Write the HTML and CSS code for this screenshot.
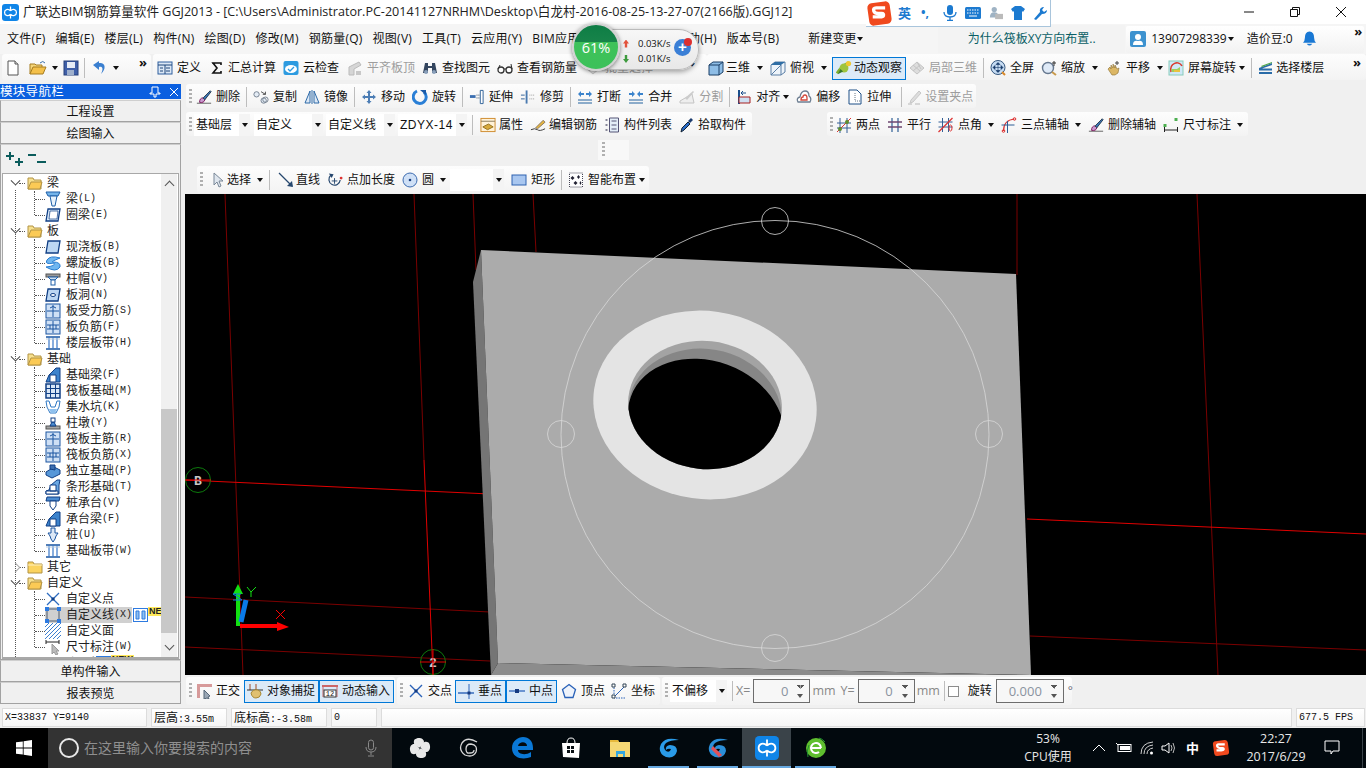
FILE: index.html
```html
<!DOCTYPE html>
<html lang="zh">
<head>
<meta charset="utf-8">
<title>广联达BIM钢筋算量软件 GGJ2013</title>
<link rel="stylesheet" href="styles.css">
</head>
<body>
<svg class="sprite" xmlns="http://www.w3.org/2000/svg">
<defs>
<symbol id="doc" viewBox="0 0 16 16"><path d="M3 1h7l3 3v11H3z" fill="#fff" stroke="#555"/><path d="M10 1v3h3" fill="#ddd" stroke="#555"/></symbol>
<symbol id="open" viewBox="0 0 18 16"><path d="M1 14V4h5l1 1h6v2" fill="#f6d67a" stroke="#a67c20"/><path d="M1 14l3-7h13l-3 7z" fill="#f4c04a" stroke="#a67c20"/><path d="M11 3q3-3 5 0" fill="none" stroke="#3a6ea8"/></symbol>
<symbol id="save" viewBox="0 0 16 16"><rect x="1" y="1" width="14" height="14" fill="#3f5fa8" stroke="#26407a"/><rect x="4" y="2" width="8" height="6" fill="#e6ecf6"/><rect x="4" y="10" width="7" height="5" fill="#9fb0cc"/></symbol>
<symbol id="undo" viewBox="0 0 16 16"><path d="M7 3C13 2 15 8 9 14 12 8 10 6 7 7v3L1 5l6-4z" fill="#3a7fd0"/></symbol>
<symbol id="def" viewBox="0 0 16 16"><rect x="1" y="2" width="14" height="12" fill="#dbe7f5" stroke="#2e5f9e"/><path d="M1 5h14M3 8h3M3 11h3M9 8h4M9 11h4M8 5v9" stroke="#1c4478" fill="none"/></symbol>
<symbol id="sigma" viewBox="0 0 12 16"><path d="M1 3h9v2M10 3H2l4 5-4 5h8v-2" fill="none" stroke="#111" stroke-width="1.6"/></symbol>
<symbol id="cloud" viewBox="0 0 16 16"><rect x="0.5" y="1" width="15" height="14" rx="2" fill="#2d9be0"/><ellipse cx="8" cy="9" rx="6" ry="4" fill="#fff"/><path d="M5 9l2 2 4-4" fill="none" stroke="#2d9be0" stroke-width="1.3"/></symbol>
<symbol id="flat" viewBox="0 0 16 16"><path d="M2 15V7l10-5 2 3-7 4v6z" fill="#d6d6d6" stroke="#bbb"/><path d="M9 15v-4h5v4z" fill="#c8c8c8"/></symbol>
<symbol id="find" viewBox="0 0 16 16"><path d="M3 3h3v3h4V3h3l2 10h-5V8H6v5H1z" fill="#33455e"/><circle cx="4" cy="12" r="2" fill="#8aa0bb"/><circle cx="12" cy="12" r="2" fill="#8aa0bb"/></symbol>
<symbol id="glass" viewBox="0 0 16 16"><circle cx="4" cy="10" r="3" fill="#fff" stroke="#333" stroke-width="1.3"/><circle cx="12" cy="10" r="3" fill="#fff" stroke="#333" stroke-width="1.3"/><path d="M7 9h2M1 9l2-4M15 9l-1-5" stroke="#333" fill="none"/></symbol>
<symbol id="cube" viewBox="0 0 16 16"><path d="M1 5l4-3h10v10l-4 3H1z" fill="#8ebde6" stroke="#1b3f66"/><path d="M1 5h10v10M11 5l4-3" fill="none" stroke="#1b3f66"/></symbol>
<symbol id="cubet" viewBox="0 0 16 16"><path d="M1 5l4-3h10v10l-4 3H1z" fill="#eef4fa" stroke="#5a7ea5"/><path d="M1 5l4-3h10l-4 3z" fill="#2f6ea5"/><path d="M11 5v10M1 15l10-10" stroke="#5a7ea5" fill="none"/></symbol>
<symbol id="orbit" viewBox="0 0 18 18"><path d="M1 15Q5 8 14 3" stroke="#7fae2f" stroke-width="3" fill="none"/><circle cx="9" cy="9" r="5" fill="#9fc43d"/><circle cx="14" cy="4" r="3" fill="#f0c832"/><path d="M2 16l6-3-3-3z" fill="#3c7a2a"/></symbol>
<symbol id="part" viewBox="0 0 16 16"><path d="M1 8l7-6 7 6-7 6z" fill="#ddd" stroke="#c4c4c4"/><path d="M4 5l7 6M8 2l4 7M4 11l7-6" stroke="#c4c4c4" fill="none"/></symbol>
<symbol id="full" viewBox="0 0 16 16"><circle cx="8" cy="7.5" r="7" fill="#c6dcf3" stroke="#36587f"/><path d="M8 3v9M3.500 7.500h9M8 2.500l-2 2h4zM8 12.500l-2-2h4zM3 7.500l2-2v4zM13 7.500l-2-2v4z" fill="#173a6a" stroke="#173a6a" stroke-width=".6"/><path d="M12 12l3 3" stroke="#d8892a" stroke-width="2"/></symbol>
<symbol id="zoomi" viewBox="0 0 16 16"><circle cx="7" cy="8" r="5.500" fill="#dfeaf7" stroke="#66788f" stroke-width="1.400"/><path d="M11 12l4 3" stroke="#c99a4c" stroke-width="2"/><path d="M13 1v5M11 3h4" stroke="#333"/></symbol>
<symbol id="pan" viewBox="0 0 16 16"><path d="M2 9l2-2 1 2V5l2 3V4l2 4V5l2 4 2-1-1 5-3 2H6z" fill="#dcb765" stroke="#8a6f33" stroke-width=".6"/><path d="M11 1v4M9 3h4" stroke="#444"/></symbol>
<symbol id="rot" viewBox="0 0 16 16"><rect x="1" y="1" width="14" height="14" fill="#cfe8f8" stroke="#8cb"/><path d="M3 12c-2-9 8-12 11-6" fill="none" stroke="#d93a2e" stroke-width="1.500"/><path d="M3 9l6 0 3-2v5H4z" fill="#9ccf5e"/><path d="M6 11h6" stroke="#e8c340" stroke-width="2"/></symbol>
<symbol id="floors" viewBox="0 0 16 16"><path d="M1 8L14 3v2L4 8.500h10v2H1zM1 12h13v2H1z" fill="#2a6ca8"/><path d="M3 6l11-4v1L4 7z" fill="#4da547"/></symbol>
<symbol id="brush" viewBox="0 0 18 16"><path d="M1 15h16" stroke="#555"/><path d="M4 14q0-5 4-5l2 2q-1 4-6 3z" fill="#c99ad0" stroke="#715"/><path d="M8 9l8-8 1 1-7 9z" fill="#3a76b8" stroke="#234"/></symbol>
<symbol id="copy" viewBox="0 0 18 16"><circle cx="4" cy="5" r="3" fill="#e4ecf5" stroke="#6c7a8a"/><circle cx="12" cy="12" r="3" fill="#e4ecf5" stroke="#6c7a8a"/><circle cx="14" cy="11" r="3" fill="none" stroke="#6c7a8a"/><path d="M9 2l5 3M14 2v3h-3" stroke="#444" fill="none"/></symbol>
<symbol id="mirror" viewBox="0 0 16 16"><path d="M1 14L6 2v12z" fill="#dce8f5" stroke="#2e6aa8"/><path d="M15 14L10 2v12z" fill="#dce8f5" stroke="#2e6aa8"/><path d="M8 1v14" stroke="#2e6aa8"/></symbol>
<symbol id="move" viewBox="0 0 16 16"><path d="M8 1l2.500 3H9v3h3V5.500L15 8l-3 2.500V9H9v3h1.500L8 15l-2.500-3H7V9H4v1.500L1 8l3-2.500V7h3V4H5.500z" fill="#4d7eb5"/></symbol>
<symbol id="turn" viewBox="0 0 16 16"><path d="M5 2a6.500 6.500 0 1 0 7 1" fill="none" stroke="#2a7fd6" stroke-width="3"/><path d="M8 1h6v5z" fill="#1a5aa8"/></symbol>
<symbol id="ext" viewBox="0 0 17 16"><path d="M12 1h3v14h-3z" fill="#fff" stroke="#2c5f96"/><path d="M1 6h6v3H1z" fill="#3a6eb0"/><path d="M8 6h3M8 9h3" stroke="#345" stroke-dasharray="1 1"/></symbol>
<symbol id="trim" viewBox="0 0 17 16"><path d="M6 1h2v14H6z" fill="#4a7ab0"/><path d="M1 6h4M1 10h4" stroke="#2c5f96"/><path d="M10 6h5M10 10h5" stroke="#999" stroke-dasharray="1 1"/></symbol>
<symbol id="brk" viewBox="0 0 16 16"><path d="M1 11h14M1 14h14" stroke="#23629f"/><path d="M1 5l3-3v2h3v2H4v2zM15 5l-3-3v2H9v2h3v2z" fill="#3a83cc"/></symbol>
<symbol id="merge" viewBox="0 0 16 16"><path d="M1 11h14M1 14h14" stroke="#23629f"/><path d="M7 5L4 2v2H1v2h3v2zM9 5l3-3v2h3v2h-3v2z" fill="#3a83cc"/></symbol>
<symbol id="split" viewBox="0 0 16 16"><path d="M1 14h14L13 5 1 12z" fill="#eee" stroke="#c4c4c4"/><path d="M6 9l8-7 1 1-7 8z" fill="#ccc"/></symbol>
<symbol id="align" viewBox="0 0 14 16"><path d="M2 1v14" stroke="#1b4f8c" stroke-width="2"/><path d="M2 8h11v6H2z" fill="#cfe0f2" stroke="#a82020"/><path d="M9 4H4l2-2M4 4l2 2" stroke="#1b4f8c" fill="none"/></symbol>
<symbol id="offs" viewBox="0 0 16 16"><path d="M2 13q-2-4 2-5 1-6 5-6 4 0 4 5 3 2 1 6z" fill="#fff" stroke="#6e7f92" stroke-width="1.300"/><path d="M5 11q0-3 2-3 0-2 2-2t2 3v2z" fill="none" stroke="#d34b3e" stroke-width="1.300"/></symbol>
<symbol id="stretch" viewBox="0 0 14 16"><path d="M1 1h8l4 4v10H1z" fill="#fff" stroke="#1d4f86"/><path d="M7 4v8h5" stroke="#678" stroke-dasharray="1 1" fill="none"/></symbol>
<symbol id="gripi" viewBox="0 0 14 16"><path d="M0 15h4M7 15h5" stroke="#ccc" stroke-width="1.500"/><path d="M3 11l8-9 2 2-8 9-3 1z" fill="#ddd" stroke="#c8c8c8"/></symbol>
<symbol id="prop" viewBox="0 0 17 16"><rect x="1" y="1" width="15" height="14" fill="#fff2d8" stroke="#cf8a2c"/><path d="M1 4h15" stroke="#8a7b5a"/><path d="M3 10l6-3 5 3-6 3z" fill="#d8aa3c" stroke="#93701f"/></symbol>
<symbol id="edit" viewBox="0 0 17 16"><path d="M1 13q4-2 7 0 2 2 8-1" fill="none" stroke="#333"/><path d="M6 11l8-8 2 2-8 7z" fill="#e6b63e" stroke="#876"/></symbol>
<symbol id="list" viewBox="0 0 15 16"><path d="M5 1h9v14H5z" fill="#e4eef8" stroke="#557"/><path d="M7 4h5M7 8h5M7 12h5" stroke="#557"/><path d="M1 2h2v2H1zM1 7h2v2H1zM1 12h2v2H1z" fill="#889"/></symbol>
<symbol id="pick" viewBox="0 0 14 16"><path d="M1 15l1-4 6-6 2 2-6 6z" fill="#2a6cc8" stroke="#123"/><path d="M8 4l3-3 2 2-3 3z" fill="#1c3c6e"/></symbol>
<symbol id="two" viewBox="0 0 14 16"><path d="M3 1v15M10 1v15M0 6h14M0 11h14" stroke="#345f96"/><path d="M0 15L14 1" stroke="#d33"/><circle cx="3" cy="12" r="2" fill="#5d8e2e"/><circle cx="10" cy="5" r="2" fill="#5d8e2e"/></symbol>
<symbol id="para" viewBox="0 0 14 16"><path d="M4 1v14M10 1v14M0 5h14M0 10h14" stroke="#2f5f96" stroke-width="1.200"/><path d="M0 5h14M0 10h14" stroke="#8c3a5c"/></symbol>
<symbol id="angle" viewBox="0 0 15 16"><path d="M4 1v14M10 1v14M0 5h14M0 10h14" stroke="#345f96"/><path d="M0 15L14 1" stroke="#d33" stroke-width="1.200"/><ellipse cx="12" cy="11" rx="1.500" ry="3" fill="none" stroke="#d33"/></symbol>
<symbol id="three" viewBox="0 0 15 16"><path d="M2 14Q2 3 13 2" fill="none" stroke="#d33" stroke-width="1.200"/><path d="M6 4v12M0 8h13" stroke="#2f5f96"/><circle cx="2" cy="14" r="1.300" fill="none" stroke="#d33"/><circle cx="13" cy="2" r="1.300" fill="none" stroke="#d33"/></symbol>
<symbol id="dim" viewBox="0 0 15 16"><path d="M1 10v5M14 10v5M1 13h13" stroke="#222"/><path d="M0 7h3v3H0zM11 1h3v3h-3z" fill="#4caf50"/></symbol>
<symbol id="cursor" viewBox="0 0 12 16"><path d="M2 1v12l3-3 2 5 2-1-2-5h4z" fill="#dfe6ee" stroke="#7a8898"/></symbol>
<symbol id="line" viewBox="0 0 16 16"><path d="M1 1l13 13" stroke="#26476e" stroke-width="1.300"/><path d="M15 15l-6-1 5-5z" fill="#26476e"/></symbol>
<symbol id="ptlen" viewBox="0 0 17 16"><path d="M14 8a6 6 0 1 1-10-5" fill="none" stroke="#26476e" stroke-width="1.300"/><path d="M2 1l3 5 2-4z" fill="#26476e"/><path d="M8 6v6M5 9h6" stroke="#26476e"/><circle cx="15" cy="6" r="1.500" fill="#d33"/></symbol>
<symbol id="circ" viewBox="0 0 16 16"><circle cx="8" cy="8" r="7" fill="#cfe0f6" stroke="#3d6cb0"/><circle cx="8" cy="8" r="1.300" fill="#1a3f80"/></symbol>
<symbol id="rect" viewBox="0 0 16 16"><rect x="1" y="3" width="14" height="10" fill="#a9c7f0" stroke="#2e62b0"/></symbol>
<symbol id="smart" viewBox="0 0 15 16"><rect x="1" y="1" width="13" height="14" fill="#fff" stroke="#445" stroke-dasharray="1 1"/><path d="M4 4l2 2-2 2-2-2zM10 3l1.500 2-1.500 2-1.500-2zM7 9l2 2-2 2-2-2zM12 9l1 2-1 2-1-2z" fill="#223"/></symbol>
<symbol id="ortho" viewBox="0 0 16 16"><path d="M1 15V1h15v3H4v11z" fill="#d79a9a"/><path d="M8 7l6 6-2 1 1 2-2-1-3 1z" fill="#9aa7b5" stroke="#567"/></symbol>
<symbol id="snap" viewBox="0 0 16 16"><path d="M3 1v6M9 1v6" stroke="#a04a28"/><path d="M0 7h16" stroke="#333"/><path d="M4 10q2-4 7-3 3 1 3 4-1 4-5 4t-5-5z" fill="#e0c070" stroke="#a88834"/></symbol>
<symbol id="dyn" viewBox="0 0 16 16"><path d="M0 2h16v2H0z" fill="#c66"/><path d="M1 2v12M15 2v12" stroke="#c66"/><rect x="2" y="7" width="12" height="7" fill="#fff" stroke="#333"/><text x="8" y="13" font-size="7" text-anchor="middle" font-family="Liberation Mono" fill="#111">12</text></symbol>
<symbol id="cross" viewBox="0 0 16 16"><path d="M2 2l12 12M14 2L2 14" stroke="#2a62b8" stroke-width="1.400"/><rect x="6.500" y="6.500" width="3" height="3" fill="#143a80"/></symbol>
<symbol id="perp" viewBox="0 0 16 16"><path d="M0 10h16" stroke="#2a62b8" stroke-width="1.400"/><path d="M11 1v15" stroke="#2a62b8"/><rect x="9.500" y="8.500" width="3" height="3" fill="#143a80"/></symbol>
<symbol id="midp" viewBox="0 0 16 16"><path d="M0 8h16" stroke="#3b6fc0" stroke-width="1.400"/><rect x="6" y="6" width="4" height="4" fill="#143a80"/></symbol>
<symbol id="vert" viewBox="0 0 16 16"><path d="M8 1.500l6.500 5-2.500 8H4l-2.500-8z" fill="#eef3fb" stroke="#2a62b8" stroke-width="1.300"/></symbol>
<symbol id="coord" viewBox="0 0 16 16"><path d="M3 2v13h12" stroke="#2a62b8" stroke-dasharray="1.500 1" fill="none"/><path d="M3 14L14 3" stroke="#2a62b8"/><path d="M1 1h3v3H1zM12 1h3v3h-3zM1 12h3v3H1z" fill="#fff" stroke="#345"/></symbol>

<symbol id="tfolder" viewBox="0 0 16 14"><path d="M1 13V2h5l1 2h7v9z" fill="#f7e08e" stroke="#b29344"/><path d="M1 13l3-7h11l-2 7z" fill="#fbca55" stroke="#b29344"/></symbol>
<symbol id="cfolder" viewBox="0 0 16 14"><path d="M1 13V2h5l1 2h8v9z" fill="#fbd35f" stroke="#b29344"/><path d="M1 5h14" stroke="#fff2c4"/></symbol>
<symbol id="tbeam" viewBox="0 0 16 16"><path d="M1 1h14l-2 4H3z" fill="#74b4ea" stroke="#1e5fa8"/><path d="M5 5h7l-2 10H7z" fill="#e7f2fc" stroke="#1e5fa8"/></symbol>
<symbol id="tslab" viewBox="0 0 16 16"><path d="M3 2h12l-2 12H1z" fill="#bcd7f3" stroke="#103f85" stroke-width="1.300"/></symbol>
<symbol id="tring" viewBox="0 0 16 16"><path d="M3 2h12l-2 12H1z" fill="#d9e8f8" stroke="#103f85" stroke-width="1.300"/><path d="M5 4h8l-1 8H4z" fill="#fff" stroke="#103f85" stroke-width=".7"/></symbol>
<symbol id="tspi" viewBox="0 0 16 16"><path d="M15 3Q5 0 2 5t7 3q2 3-8 4 10 6 14 0 1-5-7-5-3 0 7-4z" fill="#6fb6f0" stroke="#2a7dd0"/></symbol>
<symbol id="tcap" viewBox="0 0 16 16"><rect x="1" y="3" width="14" height="3" fill="#999" stroke="#555"/><path d="M3 6h10l-3 3H6z" fill="#cde" stroke="#1e5fa8"/><rect x="6" y="9" width="4" height="5" fill="#fff" stroke="#1e5fa8"/></symbol>
<symbol id="thole" viewBox="0 0 16 16"><path d="M3 2h12l-2 12H1z" fill="#bcd7f3" stroke="#103f85" stroke-width="1.300"/><ellipse cx="8" cy="8" rx="2.500" ry="1.500" fill="#fff" stroke="#103f85"/></symbol>
<symbol id="tbar" viewBox="0 0 16 16"><rect x="1" y="1" width="14" height="14" fill="#cfe0f5" stroke="#1b55a0"/><path d="M8 2v12M2 8h12M5 5q3-3 6 0" fill="none" stroke="#1b55a0"/></symbol>
<symbol id="tneg" viewBox="0 0 16 16"><rect x="1" y="1" width="14" height="14" fill="#cfe0f5" stroke="#1b55a0"/><path d="M8 2v12M2 6h12M2 10h12M5 6v4M11 6v4" fill="none" stroke="#1b55a0"/></symbol>
<symbol id="tband" viewBox="0 0 16 16"><path d="M1 2h14M1 14h14" stroke="#1b55a0" stroke-width="1.600"/><path d="M4 2v12M8 2v12M12 2v12" stroke="#3a78c8" stroke-width="1.200"/><path d="M1 4h14" stroke="#bcd" /></symbol>
<symbol id="tfbm" viewBox="0 0 16 16"><path d="M1 15l3-7 7-7h4v14z" fill="#3d83cc" stroke="#103f85"/><path d="M5 8h6v7H5z" fill="#fff" stroke="#103f85"/></symbol>
<symbol id="traft" viewBox="0 0 16 16"><rect x="1" y="1" width="14" height="14" fill="#dbe8f7" stroke="#103f85" stroke-width="1.500"/><path d="M5.500 1v14M10.500 1v14M1 5.500h14M1 10.500h14" stroke="#103f85"/></symbol>
<symbol id="tpit" viewBox="0 0 16 16"><path d="M1 2l3 0 2 6h4l2-6h3l-1 6-3 6H5L2 8z" fill="#fff" stroke="#2e78c4"/><path d="M4 10h8l-2 4H6z" fill="#8ec0ee"/></symbol>
<symbol id="tpier" viewBox="0 0 16 16"><rect x="1" y="11" width="14" height="3" fill="#a5a5a5" stroke="#555"/><path d="M5 11l2-4h2l2 4z" fill="#4b8bd0" stroke="#103f85"/><rect x="6" y="3" width="4" height="4" fill="#fff" stroke="#103f85"/></symbol>
<symbol id="tfoot" viewBox="0 0 16 16"><path d="M1 9l8-5 6 3v4l-8 4-6-3z" fill="#5697d8" stroke="#103f85"/><path d="M5 6V2h5v5z" fill="#3d6fb0" stroke="#103f85"/></symbol>
<symbol id="tstrip" viewBox="0 0 16 16"><path d="M1 15v-3l3-1 2-5 6-5h3l-1 5v9z" fill="#6aa7e2" stroke="#103f85"/><path d="M1 12h12v3H1zM5 6h6v6H5z" fill="#fff" stroke="#103f85"/></symbol>
<symbol id="tpcap" viewBox="0 0 16 16"><path d="M2 2h13l-1 4H1z" fill="#4b8bd0" stroke="#103f85"/><path d="M5 6h6v5l-3 4-3-4z" fill="#fff" stroke="#103f85"/></symbol>
<symbol id="tpile" viewBox="0 0 16 16"><path d="M6 1h4v5h3l-2 3-1 3-2 3-2-3-1-3-2-3h3z" fill="#dce8f6" stroke="#1b55a0"/></symbol>
<symbol id="tpt" viewBox="0 0 16 16"><path d="M2 2l12 12M14 2L2 14" stroke="#2d6cc0" stroke-width="1.300"/><rect x="6.500" y="6.500" width="3" height="3" fill="#103f85"/></symbol>
<symbol id="tsq" viewBox="0 0 16 16"><rect x="2" y="2" width="12" height="12" fill="none" stroke="#4a5a70"/><path d="M0 0h4v4H0zM12 0h4v4h-4zM0 12h4v4H0zM12 12h4v4h-4z" fill="#2d7ae0"/></symbol>
<symbol id="thatch" viewBox="0 0 16 16"><path d="M0 4l4-4M0 8l8-8M0 12L12 0M0 16L16 0M4 16L16 4M8 16l8-8M12 16l4-4" stroke="#3b7fd0"/></symbol>
<symbol id="tdim" viewBox="0 0 16 16"><path d="M1 1v4M14 1v4M1 3h13" stroke="#222"/><path d="M7 5v10l2-2 2 3 2-1-2-3h3z" fill="#bbb" stroke="#999"/></symbol>
<symbol id="tgrid" viewBox="0 0 15 14"><rect x=".5" y=".5" width="14" height="13" fill="#fff" stroke="#2d7ae0"/><path d="M3 3h3v8H3zM9 3h3v8H9z" fill="#8fc0f0" stroke="#2d7ae0"/></symbol>

<symbol id="app" viewBox="0 0 20 20"><rect width="20" height="20" rx="3.500" fill="#0f85e8"/><path d="M10 3v5M10 12v5M10 8C7 5 3 6.500 3 10s4 5 7 2M10 8c3-3 7-1.500 7 2s-4 5-7 2" fill="none" stroke="#fff" stroke-width="1.500"/></symbol>
<symbol id="sogou" viewBox="0 0 24 24"><rect x="2" y="2" width="20" height="20" rx="4" fill="#f0491e" transform="rotate(-8 12 12)"/><path d="M17 7H9q-3 0-2 3 1 2 4 2h3q2 0 1.500 2-.5 1-3 1H6" fill="none" stroke="#fff" stroke-width="3"/></symbol>
<symbol id="blade" viewBox="0 0 22 22"><path d="M11 10.500C6 10 3.500 6 5.500 2.500 9-.5 15 1 15 5c0 2.500-2.500 3-4 5.500z" fill="#e8e8e8"/></symbol>
</defs>
</svg>

<header class="titlebar">
  <svg class="ttl-icon"><use href="#app"/></svg>
  <span class="ttl-text">广联达BIM钢筋算量软件 GGJ2013 - [C:\Users\Administrator.PC-20141127NRHM\Desktop\白龙村-2016-08-25-13-27-07(2166版).GGJ12]</span>
  <span class="winbtns">
    <svg class="wb" viewBox="0 0 12 12"><path d="M1 6h10" stroke="#111"/></svg>
    <svg class="wb" viewBox="0 0 12 12"><path d="M1.500 3.500h7v7h-7zM3.500 3.500v-2h7v7h-2" fill="none" stroke="#111"/></svg>
    <svg class="wb" viewBox="0 0 12 12"><path d="M1 1l10 10M11 1L1 11" stroke="#111"/></svg>
  </span>
</header>

<nav class="menubar">
  <span class="mi">文件(F)</span><span class="mi">编辑(E)</span><span class="mi">楼层(L)</span><span class="mi">构件(N)</span><span class="mi">绘图(D)</span><span class="mi">修改(M)</span><span class="mi">钢筋量(Q)</span><span class="mi">视图(V)</span><span class="mi">工具(T)</span><span class="mi">云应用(Y)</span><span class="mi">BIM应用(I)</span><span class="mi mi-help">帮助(H)</span><span class="mi">版本号(B)</span>
  <span class="mi mi-new">新建变更<i class="dd"></i></span>
  <span class="ask">为什么筏板XY方向布置..</span>
  <span class="user">
    <svg class="i" viewBox="0 0 16 16"><rect width="16" height="16" rx="2" fill="#3d92cf"/><circle cx="8" cy="6" r="3" fill="#fff"/><path d="M3 14q0-5 5-4 5-1 5 4z" fill="#fff"/></svg>
    <span>13907298339</span><i class="dd"></i><span class="beans">造价豆:0</span>
    <svg class="bell" viewBox="0 0 14 16"><path d="M7 0q5 0 5 7 0 3 2 5H0q2-2 2-5 0-7 5-7z" fill="#1978d4"/><path d="M4 13h6q-3 4-6 0z" fill="#1978d4"/></svg>
    <span class="more more-user">»</span>
  </span>
</nav>

<div class="toolrow">
  <div class="tb tb-a">
    <svg class="i"><use href="#doc"/></svg>
    <svg class="i i-open"><use href="#open"/></svg><i class="dd dd-s"></i>
    <svg class="i"><use href="#save"/></svg>
    <i class="sep"></i>
    <svg class="i"><use href="#undo"/></svg><i class="dd dd-s"></i>
    <span class="more">»</span>
  </div>
  <div class="tb tb-b">
    <span class="t"><svg class="i"><use href="#def"/></svg>定义</span>
    <span class="t t-sig"><svg class="i i14"><use href="#sigma"/></svg>汇总计算</span>
    <span class="t"><svg class="i"><use href="#cloud"/></svg>云检查</span>
    <span class="t off"><svg class="i"><use href="#flat"/></svg>平齐板顶</span>
    <span class="t"><svg class="i"><use href="#find"/></svg>查找图元</span>
    <span class="t"><svg class="i"><use href="#glass"/></svg>查看钢筋量</span>
    <span class="t off"><svg class="i"><use href="#part"/></svg>批量选择</span>
    <span class="more more-b">»</span>
  </div>
  <div class="tb tb-c">
    <span class="t t-tight"><svg class="i"><use href="#cube"/></svg>三维</span><i class="dd dd-g"></i>
    <span class="t"><svg class="i"><use href="#cubet"/></svg>俯视</span><i class="dd dd-g"></i>
    <span class="t t-tight active t-obs"><svg class="i"><use href="#orbit"/></svg>动态观察</span>
    <span class="t off t-loc"><svg class="i"><use href="#part"/></svg>局部三维</span>
    <i class="sep"></i>
    <span class="t"><svg class="i"><use href="#full"/></svg>全屏</span>
    <span class="t"><svg class="i"><use href="#zoomi"/></svg>缩放</span><i class="dd dd-g"></i>
    <span class="t t-pan"><svg class="i"><use href="#pan"/></svg>平移</span><i class="dd dd-g"></i>
    <span class="t t-scr"><svg class="i"><use href="#rot"/></svg>屏幕旋转</span><i class="dd"></i>
    <i class="sep"></i>
    <span class="t t-tight"><svg class="i"><use href="#floors"/></svg>选择楼层</span>
    <span class="more more-c">»</span>
  </div>
</div>

<main class="main">
  <aside class="side">
    <div class="side-head"><span>模块导航栏</span>
      <svg class="pin" viewBox="0 0 12 12"><path d="M3 1h6v6h2v1H7v3H5V8H1V7h2z" fill="none" stroke="#fff"/></svg>
      <svg class="pin" viewBox="0 0 12 12"><path d="M2 2l8 8M10 2l-8 8" stroke="#fff"/></svg>
    </div>
    <div class="side-btn">工程设置</div>
    <div class="side-btn">绘图输入</div>
    <div class="panel">
      <div class="panel-tools">
        <svg class="exp" viewBox="0 0 18 16"><path d="M4 1v8M0 5h8M13 7v8M9 11h8" stroke="#0b5c5c" stroke-width="2" fill="none"/></svg>
        <svg class="exp" viewBox="0 0 18 16"><path d="M0 4h8M9 11h9" stroke="#0b5c5c" stroke-width="2" fill="none"/></svg>
      </div>
      <div class="tree-frame">
        <div class="tree">
          <div class="g"><i class="chev"></i><svg class="fo"><use href="#tfolder"/></svg>梁</div>
          <div class="kids">
            <div class="c"><svg class="i"><use href="#tbeam"/></svg>梁<span class="m">(L)</span></div>
            <div class="c"><svg class="i"><use href="#tring"/></svg>圈梁<span class="m">(E)</span></div>
          </div>
          <div class="g"><i class="chev"></i><svg class="fo"><use href="#tfolder"/></svg>板</div>
          <div class="kids">
            <div class="c"><svg class="i"><use href="#tslab"/></svg>现浇板<span class="m">(B)</span></div>
            <div class="c"><svg class="i"><use href="#tspi"/></svg>螺旋板<span class="m">(B)</span></div>
            <div class="c"><svg class="i"><use href="#tcap"/></svg>柱帽<span class="m">(V)</span></div>
            <div class="c"><svg class="i"><use href="#thole"/></svg>板洞<span class="m">(N)</span></div>
            <div class="c"><svg class="i"><use href="#tbar"/></svg>板受力筋<span class="m">(S)</span></div>
            <div class="c"><svg class="i"><use href="#tneg"/></svg>板负筋<span class="m">(F)</span></div>
            <div class="c"><svg class="i"><use href="#tband"/></svg>楼层板带<span class="m">(H)</span></div>
          </div>
          <div class="g"><i class="chev"></i><svg class="fo"><use href="#tfolder"/></svg>基础</div>
          <div class="kids">
            <div class="c"><svg class="i"><use href="#tfbm"/></svg>基础梁<span class="m">(F)</span></div>
            <div class="c"><svg class="i"><use href="#traft"/></svg>筏板基础<span class="m">(M)</span></div>
            <div class="c"><svg class="i"><use href="#tpit"/></svg>集水坑<span class="m">(K)</span></div>
            <div class="c"><svg class="i"><use href="#tpier"/></svg>柱墩<span class="m">(Y)</span></div>
            <div class="c"><svg class="i"><use href="#tbar"/></svg>筏板主筋<span class="m">(R)</span></div>
            <div class="c"><svg class="i"><use href="#tneg"/></svg>筏板负筋<span class="m">(X)</span></div>
            <div class="c"><svg class="i"><use href="#tfoot"/></svg>独立基础<span class="m">(P)</span></div>
            <div class="c"><svg class="i"><use href="#tstrip"/></svg>条形基础<span class="m">(T)</span></div>
            <div class="c"><svg class="i"><use href="#tpcap"/></svg>桩承台<span class="m">(V)</span></div>
            <div class="c"><svg class="i"><use href="#tfbm"/></svg>承台梁<span class="m">(F)</span></div>
            <div class="c"><svg class="i"><use href="#tpile"/></svg>桩<span class="m">(U)</span></div>
            <div class="c"><svg class="i"><use href="#tband"/></svg>基础板带<span class="m">(W)</span></div>
          </div>
          <div class="g"><i class="chev chev-r"></i><svg class="fo"><use href="#cfolder"/></svg>其它</div>
          <div class="g"><i class="chev"></i><svg class="fo"><use href="#tfolder"/></svg>自定义</div>
          <div class="kids">
            <div class="c"><svg class="i"><use href="#tpt"/></svg>自定义点</div>
            <div class="c"><svg class="i"><use href="#tsq"/></svg><span class="sel">自定义线<span class="m">(X)</span></span><svg class="tg"><use href="#tgrid"/></svg><span class="new">NE</span></div>
            <div class="c"><svg class="i"><use href="#thatch"/></svg>自定义面</div>
            <div class="c"><svg class="i"><use href="#tdim"/></svg>尺寸标注<span class="m">(W)</span></div>
          </div>
          <div class="g"><i class="chev"></i><svg class="fo"><use href="#tfolder"/></svg>CAD识别<svg class="tg"><use href="#tgrid"/></svg><span class="new">NEW</span></div>
        </div>
        <div class="scroll"><i class="up"></i><div class="track"><div class="thumb"></div></div><i class="down"></i></div>
      </div>
    </div>
    <div class="side-btn">单构件输入</div>
    <div class="side-btn">报表预览</div>
  </aside>

  <section class="work">
    <div class="tb row2">
      <i class="grip"></i>
      <span class="t"><svg class="i"><use href="#brush"/></svg>删除</span><i class="sep"></i>
      <span class="t"><svg class="i"><use href="#copy"/></svg>复制</span>
      <span class="t"><svg class="i"><use href="#mirror"/></svg>镜像</span><i class="sep"></i>
      <span class="t"><svg class="i"><use href="#move"/></svg>移动</span>
      <span class="t"><svg class="i"><use href="#turn"/></svg>旋转</span><i class="sep"></i>
      <span class="t"><svg class="i"><use href="#ext"/></svg>延伸</span>
      <span class="t"><svg class="i"><use href="#trim"/></svg>修剪</span><i class="sep"></i>
      <span class="t"><svg class="i"><use href="#brk"/></svg>打断</span>
      <span class="t"><svg class="i"><use href="#merge"/></svg>合并</span>
      <span class="t off"><svg class="i"><use href="#split"/></svg>分割</span><i class="sep"></i>
      <span class="t"><svg class="i"><use href="#align"/></svg>对齐</span><i class="dd"></i>
      <span class="t"><svg class="i"><use href="#offs"/></svg>偏移</span>
      <span class="t"><svg class="i"><use href="#stretch"/></svg>拉伸</span><i class="sep sep-w"></i>
      <span class="t off t-tight"><svg class="i"><use href="#gripi"/></svg>设置夹点</span>
    </div>
    <div class="row3">
      <div class="tb row3a">
        <i class="grip"></i>
        <span class="combo c56"><span>基础层</span><b class="cb"><i class="dd"></i></b></span>
        <span class="combo c70"><span>自定义</span><b class="cb"><i class="dd"></i></b></span>
        <span class="combo c70"><span>自定义线</span><b class="cb"><i class="dd"></i></b></span>
        <span class="combo c70 latin"><span>ZDYX-14</span><b class="cb"><i class="dd"></i></b></span>
        <i class="sep"></i>
        <span class="t t-3"><svg class="i"><use href="#prop"/></svg>属性</span>
        <span class="t t-3"><svg class="i"><use href="#edit"/></svg>编辑钢筋</span>
        <span class="t"><svg class="i"><use href="#list"/></svg>构件列表</span>
        <span class="t t-3"><svg class="i"><use href="#pick"/></svg>拾取构件</span>
      </div>
      <div class="tb row3b">
        <i class="grip"></i>
        <span class="t"><svg class="i"><use href="#two"/></svg>两点</span>
        <span class="t"><svg class="i"><use href="#para"/></svg>平行</span>
        <span class="t"><svg class="i"><use href="#angle"/></svg>点角</span><i class="dd dd-g"></i>
        <span class="t"><svg class="i"><use href="#three"/></svg>三点辅轴</span><i class="dd dd-g"></i>
        <span class="t"><svg class="i"><use href="#brush"/></svg>删除辅轴</span>
        <span class="t"><svg class="i"><use href="#dim"/></svg>尺寸标注</span><i class="dd dd-g"></i>
      </div>
    </div>
    <div class="grabrow"><div class="grab"><i class="grip"></i></div></div>
    <div class="tb row5">
      <i class="grip"></i>
      <span class="t t-sel"><svg class="i"><use href="#cursor"/></svg>选择</span><i class="dd dd-g"></i><i class="sep"></i>
      <span class="t t-line"><svg class="i"><use href="#line"/></svg>直线</span>
      <span class="t"><svg class="i"><use href="#ptlen"/></svg>点加长度</span>
      <span class="t"><svg class="i"><use href="#circ"/></svg>圆</span><i class="dd dd-g"></i>
      <span class="combo c54"><span></span><b class="cb"><i class="dd"></i></b></span>
      <span class="t"><svg class="i"><use href="#rect"/></svg>矩形</span><i class="sep"></i>
      <span class="t"><svg class="i"><use href="#smart"/></svg>智能布置</span><i class="dd"></i>
    </div>

    <div class="canvas">
      <svg class="cad" viewBox="185 194 1181 481" xmlns="http://www.w3.org/2000/svg">
        <defs>
          <clipPath id="bore"><ellipse cx="705" cy="405" rx="77" ry="64" transform="rotate(6 705 405)"/></clipPath>
        </defs>
        <rect x="185" y="194" width="1181" height="481" fill="#000"/>
        <g fill="none" stroke="#7a0000">
          <path d="M225 194L243 675M414 194L424 460M473 194L476 270M533 194L536 252M1017 194L1017 275"/>
          <path d="M185 597L490 612M185 647L490 661"/>
          <path d="M1030 636L1366 650"/>
          <path d="M1197 194L1218 675"/>
        </g>
        <g fill="none" stroke="#e00000">
          <path d="M424 460L433 675"/>
          <path d="M185 480L490 494M1027 519L1366 534"/>
        </g>
        <path d="M481 250L473 282L491 675L498 663z" fill="#757575"/>
        <path d="M481 250L1016 274L1031 675L498 663z" fill="#ababab"/>
        <path d="M498 663L1031 675H491z" fill="#8c8c8c"/>
        <ellipse cx="705" cy="405" rx="112" ry="94" transform="rotate(8 705 405)" fill="#e4e4e4"/>
        <ellipse cx="705" cy="405" rx="77" ry="64" transform="rotate(6 705 405)" fill="#a3a3a3"/>
        <g clip-path="url(#bore)">
          <ellipse cx="705" cy="413" rx="77" ry="64" transform="rotate(10 705 413)" fill="#868686"/>
          <ellipse cx="706" cy="424" rx="80" ry="63" transform="rotate(20 706 424)" fill="#000"/>
        </g>
        <g fill="none" stroke="#d8d8d8" stroke-width=".8">
          <circle cx="775" cy="434.500" r="214"/>
          <circle cx="775" cy="221" r="13.500"/>
          <circle cx="561" cy="434" r="13.500"/>
          <circle cx="989" cy="434" r="13.500"/>
          <circle cx="775" cy="648" r="13.500"/>
        </g>
        <g fill="none" stroke="#0d7a0d">
          <circle cx="198" cy="480" r="12.500"/>
          <circle cx="433" cy="662" r="12.500"/>
        </g>
        <text x="198" y="485" class="axis">B</text>
        <text x="433" y="667" class="axis">2</text>
        <path d="M185 480H211M433 649v26M420 662h26" stroke="#e00000" fill="none"/>
        <path d="M238 626V590" stroke="#12e012" stroke-width="4"/>
        <path d="M238 584l-5 10h10z" fill="#12e012"/>
        <path d="M241 622L246 600" stroke="#0a7ae8" stroke-width="5"/>
        <path d="M233 600h9l-9 -6h8" stroke="#0a7ae8" fill="none"/>
        <path d="M240 626H278" stroke="#f00" stroke-width="4"/>
        <path d="M277 622l12 5-12 4z" fill="#f00"/>
        <path d="M247 587l4 5 5-5M251 592v5" stroke="#12e012" fill="none"/>
        <path d="M276 610l9 9M285 610l-9 9" stroke="#f00" fill="none"/>
      </svg>
    </div>

    <div class="bottom">
      <div class="tb bot1">
        <i class="grip"></i>
        <span class="t"><svg class="i"><use href="#ortho"/></svg>正交</span>
        <span class="t active t-b"><svg class="i"><use href="#snap"/></svg>对象捕捉</span>
        <span class="t active t-b"><svg class="i"><use href="#dyn"/></svg>动态输入</span>
      </div>
      <div class="tb bot2">
        <i class="grip"></i>
        <span class="t"><svg class="i"><use href="#cross"/></svg>交点</span>
        <span class="t active t-b"><svg class="i"><use href="#perp"/></svg>垂点</span>
        <span class="t active t-b"><svg class="i"><use href="#midp"/></svg>中点</span>
        <span class="t t-v"><svg class="i"><use href="#vert"/></svg>顶点</span>
        <span class="t"><svg class="i"><use href="#coord"/></svg>坐标</span>
      </div>
      <div class="tb bot3">
        <i class="grip"></i>
        <span class="combo c57"><span>不偏移</span><b class="cb"><i class="dd"></i></b></span>
        <i class="sep"></i>
        <span class="lbl">X=</span>
        <span class="spin s57"><span>0</span><i class="arrows"></i></span>
        <span class="lbl mm">mm</span>
        <span class="lbl">Y=</span>
        <span class="spin s57"><span>0</span><i class="arrows"></i></span>
        <span class="lbl mm">mm</span>
        <i class="sep"></i>
        <i class="check"></i>
        <span class="rot-l">旋转</span>
        <span class="spin s68"><span>0.000</span><i class="arrows"></i></span>
        <span class="deg">°</span>
      </div>
    </div>
  </section>
</main>

<footer class="status">
  <span class="cell c1 mono">X=33837 Y=9140</span>
  <span class="cell c2">层高<span class="m">:3.55m</span></span>
  <span class="cell c3">底标高<span class="m">:-3.58m</span></span>
  <span class="cell c4 mono">0</span>
  <span class="cell c5"></span>
  <span class="cell c6 mono">677.5 FPS</span>
</footer>

<div class="taskbar">
  <div class="start"><svg class="win" viewBox="0 0 16 16"><path d="M0 2.300l6.800-.9v6.200H0zM7.600 1.300L16 0v7.600H7.600zM0 8.400h6.800v6.200L0 13.700zM7.600 8.400H16V16l-8.400-1.200z" fill="#fff"/></svg></div>
  <div class="search">
    <i class="cortana"></i>
    <span class="search-t">在这里输入你要搜索的内容</span>
    <svg class="mic" viewBox="0 0 12 18"><rect x="3.500" y="1" width="5" height="10" rx="2.500" fill="none" stroke="#8a8a8a"/><path d="M1 8q0 5 5 5t5-5M6 13v3M3 17h6" fill="none" stroke="#8a8a8a"/></svg>
  </div>
  <div class="apps">
    <span class="app"><svg class="ai" viewBox="0 0 22 22"><use href="#blade" width="22" height="22"/><use href="#blade" width="22" height="22" transform="rotate(90 11 11)"/><use href="#blade" width="22" height="22" transform="rotate(180 11 11)"/><use href="#blade" width="22" height="22" transform="rotate(270 11 11)"/></svg></span>
    <span class="app"><svg class="ai" viewBox="0 0 22 22"><path d="M19 5Q9-1 4 6q-4 7 3 12 8 3 11-3 2-7-5-8-5 0-5 5t4 4q4 0 4-3" fill="none" stroke="#d8d8d8" stroke-width="1.300"/></svg></span>
    <span class="app app-edge"><svg class="ai" viewBox="0 0 22 22"><path d="M1 11C1 4 7 0 12 0c6 0 10 4 10 11v2H7c0 4 7 6 13 2v5c-7 3-19 2-19-9zm6-2h9c0-5-8-5-9 0z" fill="#0a78d6"/></svg></span>
    <span class="app"><svg class="ai" viewBox="0 0 22 22"><path d="M2 6h18l-1 15-16-1z" fill="#fff"/><path d="M7 6q0-5 4-5t4 5" fill="none" stroke="#fff"/><path d="M7 9h3v3H7zM11 9h3v3h-3zM7 13h3v3H7zM11 13h3v3h-3z" fill="#0a1014"/></svg></span>
    <span class="app"><svg class="ai" viewBox="0 0 22 22"><path d="M1 3h8l1 2h11v15H1z" fill="#f5d774"/><path d="M1 3h8l1 2H1z" fill="#e8b93c"/><path d="M7 14h9v6h-2v-3H9v3H7z" fill="#35a7e0"/></svg></span>
    <span class="app"><svg class="ai" viewBox="0 0 22 22"><path d="M21 3Q8-1 3 7q-4 9 5 13 9 2 11-6 0-6-7-6-5 1-4 5 2-2 5-1-1 4-5 2-4-4 0-8 4-3 13-3z" fill="#2a9be8"/></svg></span>
    <span class="app"><svg class="ai" viewBox="0 0 22 22"><path d="M21 3Q8-1 3 7q-4 9 5 13 9 2 11-6 0-6-7-6-5 1-4 5 2-2 5-1-1 4-5 2-4-4 0-8 4-3 13-3z" fill="#2a8ed8"/><path d="M4 12l8 8 3-2-9-9z" fill="#e0505a"/></svg></span>
    <span class="app app-on"><svg class="ai ai24"><use href="#app"/></svg></span>
    <span class="app"><svg class="ai" viewBox="0 0 22 22"><circle cx="11" cy="11" r="10" fill="#5fbf2f"/><path d="M5 11h11M16 11a5 5 0 1 0-2 4" fill="none" stroke="#fff" stroke-width="2"/><path d="M3 20Q1 14 4 8M14 1q4 1 6 4" stroke="#1f8f2f" fill="none"/></svg></span>
  </div>
  <div class="tray">
    <span class="cpu"><span>53%</span><span>CPU使用</span></span>
    <svg class="tr tr-up" viewBox="0 0 14 10"><path d="M1 8l6-6 6 6" fill="none" stroke="#fff"/></svg>
    <svg class="tr tr-bat" viewBox="0 0 18 12"><rect x="3" y="2.500" width="13" height="7" fill="none" stroke="#fff"/><rect x="5" y="4" width="10" height="4" fill="#fff"/><path d="M1 1l2 2" stroke="#fff"/></svg>
    <svg class="tr tr-wifi" viewBox="0 0 14 14"><path d="M1 13Q1 2 13 1M4 13q0-8 9-9M7 13q0-5 6-6" fill="none" stroke="#cfcfcf"/><circle cx="11.500" cy="12" r="1.500" fill="#fff"/></svg>
    <svg class="tr tr-vol" viewBox="0 0 16 14"><path d="M1 5h3l4-3v10L4 9H1z" fill="none" stroke="#fff"/><path d="M10 4q2 3 0 6M12 2q3 5 0 10" fill="none" stroke="#bbb"/></svg>
    <span class="ime">中</span>
    <svg class="tr tr-s"><use href="#sogou"/></svg>
    <span class="clock"><span>22:27</span><span>2017/6/29</span></span>
    <svg class="tr tr-note" viewBox="0 0 16 16"><path d="M1 1h14v10H9l-2 3v-3H1z" fill="none" stroke="#fff"/></svg>
  </div>
</div>

<div class="ime-bar">
  <svg class="ime-s"><use href="#sogou"/></svg>
  <span class="ime-en">英</span>
  <span class="ime-dot">•,</span>
  <svg class="ime-i" viewBox="0 0 14 16"><rect x="4" y="0" width="6" height="10" rx="3" fill="#1c7ad0"/><path d="M1 7q0 5 6 5t6-5M7 12v3M4 15.500h6" fill="none" stroke="#1c7ad0" stroke-width="1.300"/></svg>
  <svg class="ime-i ime-k" viewBox="0 0 16 12"><rect width="16" height="12" rx="1.500" fill="#1c7ad0"/><path d="M2 3h12M2 6h12" stroke="#fff" stroke-dasharray="1.500 1"/><path d="M4 9h8" stroke="#fff"/></svg>
  <svg class="ime-i" viewBox="0 0 16 14"><circle cx="6" cy="3" r="3" fill="#9fb3c4"/><path d="M1 12q0-6 5-6t5 6z" fill="#9fb3c4"/><rect x="7" y="8" width="9" height="6" fill="#bbb"/></svg>
  <svg class="ime-i" viewBox="0 0 14 14"><path d="M4 0h6l4 3-2 3-1-1v9H3V5L2 6 0 3z" fill="#1c7ad0"/></svg>
  <svg class="ime-i" viewBox="0 0 14 14"><path d="M1 13l6-7q-1-4 3-5l1 0-2 3 2 2 3-2q0 4-5 4l-6 6z" fill="#1c7ad0"/></svg>
</div>

<div class="speed">
  <div class="ball"><span>61%</span></div>
  <div class="rates">
    <span class="rate"><i class="a-up"></i>0.03K/s</span>
    <span class="rate"><i class="a-down"></i>0.01K/s</span>
  </div>
  <div class="plus">+<i class="dot"></i></div>
</div>
</body>
</html>
```
FILE: styles.css
```css
* { box-sizing: border-box; }
html, body { margin: 0; height: 100%; }
body {
  width: 1366px; height: 768px; overflow: hidden;
  display: flex; flex-direction: column;
  position: relative;
  background: #f0f0f0; color: #111;
  font: 12px/16px "Open Sans", "Noto Sans CJK SC", sans-serif;
}
i, b { font-style: normal; font-weight: normal; display: block; }
.sprite { position: absolute; width: 0; height: 0; }
.i { width: 16px; height: 16px; flex: none; display: block; }
.i14 { width: 14px; }
.i-open { width: 18px; margin-left: 3px; }

.titlebar { height: 24px; background: #fff; display: flex; align-items: center; padding-left: 2px; flex: none; }
.ttl-icon { width: 17px; height: 17px; flex: none; margin-right: 4px; }
.ttl-text { font-size: 12.570px; white-space: nowrap; color: #222; }
.winbtns { margin-left: auto; display: flex; gap: 34px; padding-right: 19px; }
.wb { width: 12px; height: 12px; display: block; }

.menubar { height: 30px; flex: none; background: #f5f5f5; display: flex; align-items: center; padding-left: 7px; gap: 10px; white-space: nowrap; }
.mi { display: flex; align-items: center; flex: none; letter-spacing: .25px; }
.mi-help { margin-left: 75px; }
.mi-new { margin-left: 19px; gap: 5px; letter-spacing: 0; }
.ask { width: 187px; height: 28px; background: #f3f3f3; color: #0a5f66; text-align: center; line-height: 28px; margin-left: 65px; flex: none; }
.user { width: 238px; height: 27px; margin-left: -9px; background: linear-gradient(#fff, #f2f2f2); border-radius: 2px; display: flex; align-items: center; padding-left: 4px; gap: 5px; position: relative; flex: none; font-size: 12px; }
.beans { margin-left: 8px; font-size: 12px; }
.bell { width: 13px; height: 16px; margin-left: 5px; }
.more { font-size: 13px; line-height: 10px; font-weight: 700; position: relative; top: -6px; flex: none; }
.more-user { margin-left: auto; margin-right: 2px; top: -8px; }

.toolrow { height: 26px; flex: none; display: flex; align-items: stretch; }
.tb { display: flex; align-items: center; gap: 7px; background: linear-gradient(#fdfdfd, #f3f3f3); border-radius: 3px; white-space: nowrap; flex: none; }
.tb-a { width: 149px; margin-left: 2px; padding: 2px 0 0 3px; gap: 5px; }
.tb-a .more { margin-left: 15px; }
.tb-a .sep { margin: 0 2px 0 0; }
.tb-b { width: 554px; margin-left: 2px; padding: 2px 0 0 4px; }
.tb-b .more-b { margin-left: 27px; }
.tb-b .off { margin-left: 1px; }
.tb-c { flex: 1; padding: 2px 5px 0 1px; }
.tb-c .dd-g { margin-left: 0; }
.more-c { margin-left: auto; }
.t { display: inline-flex; align-items: center; gap: 4px; flex: none; }
.t-tight { gap: 2px; }
.t-sig { margin-left: 2px; }
.t-pan { margin-left: 1px; }
.t-obs { margin-left: -2px; }
.tb .t-loc { margin-left: -4px; }
.t-scr { margin-left: -2px; }
.t-3 { gap: 3px; }
.t-sel { gap: 1px; }
.t-line { margin-left: 2px; gap: 2px; }
.off { color: #9d9d9d; }
.active { background: #dbeaf8; border: 1px solid #0078d7; height: 23px; padding: 0 3px; }
.sep { width: 1px; height: 20px; background: #bdbdbd; margin: 0 -1px; flex: none; }
.sep-w { margin: 0 -2px 0 3px; }
.dd { width: 0; height: 0; border: 3.500px solid transparent; border-top: 4px solid #111; border-bottom: 0; flex: none; margin-left: -4px; }
.dd-s { margin-left: 0; }
.dd-g { margin-left: -1px; }
.grip { width: 3px; height: 16px; background: repeating-linear-gradient(#b0b0b0 0 2px, transparent 2px 4px); flex: none; margin-left: 3px; }

.main { height: 621px; margin-top: 4px; flex: none; display: flex; align-items: stretch; }
.side { width: 181px; flex: none; display: flex; flex-direction: column; }
.side-head { height: 15px; margin-bottom: 1px; background: #0a5fe0; color: #fff; font-size: 12.500px; line-height: 15px; display: flex; align-items: center; gap: 6px; }
.side-head span { margin-right: auto; letter-spacing: .3px; }
.pin { width: 12px; height: 12px; margin-right: 1px; }
.side-btn { height: 22px; flex: none; border: 1px solid #a2a2a2; border-top-color: #cfcfcf; background: #f0f0f0; text-align: center; line-height: 22px; font-size: 12px; }
.panel { height: 516px; flex: none; border: 1px solid #a2a2a2; border-top-color: #ccc; padding: 0 1px; background: #f0f0f0; display: flex; flex-direction: column; }
.panel-tools { height: 28px; display: flex; align-items: center; gap: 4px; padding: 0 4px; flex: none; }
.exp { width: 18px; height: 16px; }
.tree-frame { flex: 1; min-height: 0; background: #fff; border: 1px solid #a8a8a8; display: flex; overflow: hidden; border-bottom-width: 2px; }
.tree { flex: 1; min-width: 0; position: relative; overflow: hidden; color: #222; white-space: nowrap; padding-top: 1px; }
.tree::before { content: ""; position: absolute; left: 12px; top: 16px; bottom: 0; border-left: 1px dotted #555; }
.g { height: 16px; display: flex; align-items: center; position: relative; padding-left: 9px; }
.g::after { content: ""; position: absolute; left: 16px; top: 8px; width: 6px; border-top: 1px dotted #555; }
.fo { width: 16px; height: 14px; margin: 0 4px 0 8px; flex: none; position: relative; z-index: 1; }
.chev { width: 7px; height: 7px; border-right: 1.500px solid #444; border-bottom: 1.500px solid #444; transform: rotate(45deg) translate(-2px, -2px); flex: none; position: relative; z-index: 1; }
.chev-r { transform: rotate(-45deg); border-color: #aaa; }
.kids { position: relative; }
.kids::before { content: ""; position: absolute; left: 31px; top: 0; bottom: 8px; border-left: 1px dotted #555; }
.c { height: 16px; display: flex; align-items: center; padding-left: 42px; position: relative; }
.c::before { content: ""; position: absolute; left: 32px; top: 8px; width: 10px; border-top: 1px dotted #555; }
.c .i { margin-right: 5px; }
.m { font: 10px/16px "Liberation Mono", monospace; }
.sel { background: #d0d0d0; display: flex; margin-left: -21px; padding-left: 21px; position: relative; }
.c:has(.sel) .i { position: relative; z-index: 1; }
.tg { width: 15px; height: 14px; flex: none; margin-left: 1px; }
.new { background: #ffe95a; color: #222; font: 700 9px/9px "Liberation Sans", sans-serif; align-self: flex-start; padding: 0 1px; }
.scroll { width: 16px; flex: none; background: #f0f0f0; display: flex; flex-direction: column; align-items: center; margin-right: 1px; }
.track { flex: 1; width: 100%; position: relative; }
.thumb { position: absolute; left: 0; right: 0; top: 218px; height: 224px; background: #c8c8c8; }
.up, .down { width: 7px; height: 7px; border-left: 1.500px solid #555; border-top: 1.500px solid #555; flex: none; }
.up { transform: rotate(45deg); margin: 8px 0 2px; }
.down { transform: rotate(225deg); margin: 2px 0 8px; }

.work { flex: 1; min-width: 0; margin-left: 3px; display: flex; flex-direction: column; }
.row2 { height: 24px; width: 790px; margin-left: 2px; padding-top: 1px; }
.row2 .grip { margin-right: -3px; }
.row3 { margin-top: 4px; height: 24px; display: flex; gap: 75px; margin-left: 2px; flex: none; }
.row3 .tb { padding-top: 1px; }
.row3a { width: 566px; gap: 6px; }
.row3a .grip { margin-right: -4px; }
.row3a .t { margin-left: 1px; }
.row3a .sep { margin-right: 0; }
.row3a .combo { margin-right: -3px; }
.row3a .c56 { margin-right: -2px; }
.row3a .latin { margin-right: 0; }
.row3b { width: 421px; }
.row3b .grip { margin-right: -4px; }
.combo { height: 22px; display: flex; background: #fff; align-items: center; padding-left: 2px; flex: none; }
.combo > span { flex: 1; white-space: nowrap; }
.cb { width: 11px; height: 100%; background: #f4f4f4; display: flex; align-items: center; justify-content: center; flex: none; }
.cb .dd { margin: 0; }
.c56 { width: 56px; }
.c70 { width: 69px; }
.c54 { width: 54px; margin-left: -3px; }
.c57 { width: 57px; }
.latin { font-family: "Liberation Sans", sans-serif; letter-spacing: .5px; }
.grabrow { height: 30px; flex: none; padding: 4px 0 0 414px; }
.grab { width: 31px; height: 20px; background: #f8f8f8; display: flex; align-items: center; padding-left: 1px; }
.row5 { height: 27px; width: 452px; margin-left: 13px; flex: none; padding-top: 1px; }

.canvas { height: 481px; margin: 1px 0 0 1px; flex: none; background: #000; overflow: hidden; }
.cad { width: 1181px; height: 481px; display: block; }
.axis { font: 700 13px "Liberation Mono", monospace; fill: #c8c8c8; text-anchor: middle; }

.bottom { height: 28px; margin-top: 2px; display: flex; margin-left: 2px; flex: none; }
.bottom .tb { height: 28px; }
.bottom .bot1 { width: 209px; gap: 4px; margin-right: 2px; }
.bottom .bot2 { width: 263px; gap: 6px; margin-right: 2px; }
.bottom .bot3 { width: 410px; gap: 6px; }
.t-b { padding: 0 3px 0 2px; height: 23px; }
.bot1 .t-b + .t-b { margin-left: -4px; }
.bot2 .grip { margin-right: -1px; }
.bot2 .t-b { margin-left: -3px; }
.bot2 .t-b + .t-b { margin-left: -6px; }
.bot2 .t-v { margin-left: -2px; }
.bot3 .grip { margin-right: -4px; }
.bot3 .sep { margin: 0 -3px 0 -1px; }
.lbl { color: #888; font-size: 12.500px; flex: none; margin: 0 -3px 0 0; }
.mm { margin: 0 -1px 0 -4px; }
.spin { height: 24px; border: 1px solid #6d6d6d; background: #f7f7f7; display: flex; align-items: center; justify-content: flex-end; color: #8a93a0; padding-right: 21px; position: relative; flex: none; font-size: 13px; }
.s57 { width: 57px; }
.s68 { width: 68px; }
.arrows { position: absolute; right: 5px; top: 5px; width: 7px; height: 13px; background:
  linear-gradient(to top right, transparent 50%, #555 50%) 0 0 / 3.500px 4px no-repeat,
  linear-gradient(to top left, transparent 50%, #555 50%) 3.500px 0 / 3.500px 4px no-repeat; }
.arrows::after { content: ""; position: absolute; left: 0; bottom: 0; border: 3.500px solid transparent; border-top: 4px solid #555; border-bottom: 0; }
.check { width: 11px; height: 11px; border: 1px solid #8c8c8c; background: #fff; flex: none; }
.rot-l { margin: 0 -2px 0 3px; flex: none; }
.deg { color: #667; font-size: 12px; margin-left: -2px; }

.status { height: 19px; margin-top: 3px; flex: none; display: flex; gap: 4px; padding: 0 1px 0 2px; }
.cell { height: 19px; border: 1px solid #dcdcdc; background: linear-gradient(#fff, #f6f6f6); padding-left: 2px; font-size: 12px; line-height: 18px; white-space: nowrap; flex: none; }
.mono { font: 10px/18px "Liberation Mono", monospace; }
.cell .m { line-height: 16px; }
.c1 { width: 145px; }
.c2 { width: 76px; }
.c3 { width: 96px; }
.c4 { width: 46px; }
.c5 { width: 911px; }
.c6 { width: 69px; }

.taskbar { height: 40px; margin-top: 1px; flex: none; display: flex; background: #02090e; color: #fff; }
.start { width: 48px; background: #000; display: flex; align-items: center; justify-content: center; flex: none; }
.win { width: 16px; height: 16px; }
.search { width: 344px; background: #333; display: flex; align-items: center; padding-left: 11px; flex: none; }
.cortana { width: 20px; height: 20px; border: 2.500px solid #e8e8e8; border-radius: 50%; flex: none; }
.search-t { margin-left: 5px; color: #8f8f8f; font-size: 14px; white-space: nowrap; }
.mic { width: 12px; height: 18px; margin-left: 113px; flex: none; }
.apps { display: flex; margin-left: 3px; flex: none; }
.app { width: 49px; height: 40px; display: flex; align-items: center; justify-content: center; flex: none; position: relative; }
.app-edge { margin-left: 4px; }
.app:nth-child(n+6)::after { content: ""; position: absolute; left: 4px; right: 4px; bottom: 0; height: 2px; background: #66a8e0; }
.app-on { background: #3a4349; }
.app-on::after { left: 0 !important; right: 0 !important; }
.ai { width: 22px; height: 22px; }
.ai24 { width: 24px; height: 24px; }
.tray { margin-left: auto; display: flex; align-items: center; flex: none; position: relative; width: 366px; padding-left: 16px; border-right: 1px solid #3a4349; margin-right: 3px; }
.cpu, .clock { display: flex; flex-direction: column; align-items: center; color: #e8e8e8; line-height: 18px; flex: none; }
.cpu { width: 70px; font-size: 12px; }
.tr { flex: none; display: block; }
.tr-up { width: 14px; height: 10px; margin-left: 9px; }
.tr-bat { width: 18px; height: 12px; margin-left: 9px; }
.tr-wifi { width: 14px; height: 14px; margin-left: 7px; }
.tr-vol { width: 16px; height: 14px; margin-left: 7px; }
.ime { font-size: 13px; font-weight: 700; margin-left: 9px; flex: none; }
.tr-s { width: 18px; height: 18px; margin-left: 13px; }
.clock { width: 70px; margin-left: 11px; font-size: 12.500px; }
.tr-note { width: 16px; height: 16px; margin-left: 13px; }

.ime-bar { position: absolute; left: 866px; top: 0; width: 185px; height: 27px; background: #fff; border: 1px solid #a9c5dc; border-top: 0; border-left: 0; display: flex; align-items: center; }
.ime-s { width: 27px; height: 27px; flex: none; }
.ime-en { color: #1c7ad0; font-size: 13px; font-weight: 700; margin-left: 5px; }
.ime-dot { color: #1c7ad0; font-weight: 700; margin-left: 10px; width: 14px; }
.ime-i { width: 14px; height: 16px; flex: none; margin-left: 8px; }
.ime-k { width: 16px; }

.speed { position: absolute; left: 572px; top: 23px; width: 127px; height: 49px; }
.speed::before { content: ""; position: absolute; left: 20px; top: 6px; right: 0; height: 39px; background: linear-gradient(#f7f7f7, #e8e8e8); border: 1px solid #bbb; border-radius: 20px; box-shadow: 0 2px 5px rgba(0,0,0,.35); }
.ball { position: absolute; left: 0; top: 0; width: 48px; height: 48px; border-radius: 50%; border: 2px solid #d2d2d2; box-shadow: 0 1px 4px rgba(0,0,0,.5); background: linear-gradient(#0e7d45 0, #17844a 38%, #3fc25a 38%, #3cc15a 100%); color: #fff; font: 14.500px/46px "Open Sans", sans-serif; text-align: center; }
.rates { position: absolute; left: 51px; top: 13px; font-size: 9.500px; line-height: 15px; color: #111; }
.rate { display: flex; align-items: center; gap: 9px; white-space: nowrap; }
.a-up, .a-down { width: 6px; height: 8px; background: #e2533c; clip-path: polygon(50% 0, 100% 50%, 70% 50%, 70% 100%, 30% 100%, 30% 50%, 0 50%); flex: none; }
.a-down { background: #3d9a3d; transform: rotate(180deg); }
.plus { position: absolute; left: 102px; top: 16px; width: 17px; height: 17px; background: #3a7fd6; border-radius: 50%; color: #fff; text-align: center; font: 700 15px/16px "Liberation Sans", sans-serif; }
.dot { position: absolute; left: 10px; top: -1px; width: 8px; height: 8px; border-radius: 50%; background: #dc2f2f; }
```
